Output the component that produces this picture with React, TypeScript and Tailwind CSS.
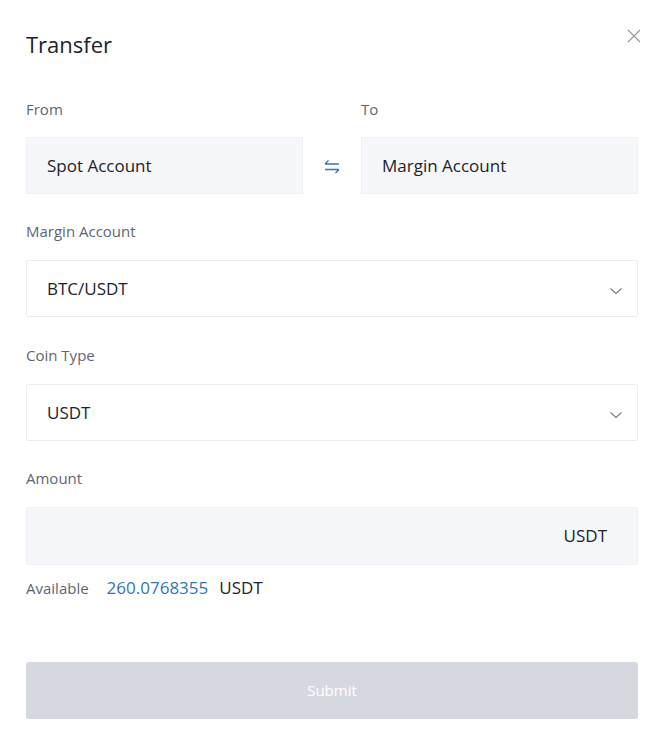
import { useState } from "react";

const FIELD_LABEL = "text-[15px] leading-5 text-[#5e6673]";

function Chevron() {
  return (
    <svg width="14" height="14" viewBox="0 0 14 14" fill="none" aria-hidden="true">
      <path d="M1.5 4.5 L7 9.5 L12.5 4.5" stroke="#707a8a" strokeWidth="1.1" />
    </svg>
  );
}

function SelectBox({ value }: { value: string }) {
  return (
    <div className="flex h-[57px] items-center justify-between rounded-[2px] border border-[#eaecef] bg-white pl-5 pr-[14px] text-[17px] text-[#1e2329]">
      <span>{value}</span>
      <span className="mt-1">
        <Chevron />
      </span>
    </div>
  );
}

export default function App() {
  const [amount, setAmount] = useState("");

  return (
    <div
      className="min-h-[756px] w-[664px] bg-white px-[26px] pt-[29px]"
      style={{ fontFamily: '"Open Sans", "Noto Sans", sans-serif' }}
    >
      {/* header */}
      <div className="flex items-start justify-between">
        <h2 className="text-[22px] leading-[30px] text-[#1e2329]">Transfer</h2>
        <button className="mr-[-4px] mt-[-1px] text-[#929aa5]" aria-label="Close">
          <svg width="16" height="16" viewBox="0 0 16 16" fill="none">
            <path d="M2 2 L14 14 M14 2 L2 14" stroke="currentColor" strokeWidth="1.1" />
          </svg>
        </button>
      </div>

      {/* from / to */}
      <div className="mt-[40px] grid grid-cols-[1fr_58px_1fr]">
        <div>
          <p className={FIELD_LABEL}>From</p>
          <div className="mt-[18px] flex h-[57px] items-center border border-[#eef0f3] bg-[#f5f7fa] pl-5 text-[17px] text-[#1e2329]">
            Spot Account
          </div>
        </div>
        <div className="flex items-end justify-center pb-[20px]">
          <svg width="16" height="16" viewBox="0 0 16 16" fill="none" aria-hidden="true">
            <path d="M1 6 H15 M1 6 L4.5 2.5" stroke="#3375bb" strokeWidth="1.4" />
            <path d="M15 11.5 H1 M15 11.5 L11.5 15" stroke="#3375bb" strokeWidth="1.4" />
          </svg>
        </div>
        <div>
          <p className={FIELD_LABEL}>To</p>
          <div className="mt-[18px] flex h-[57px] items-center border border-[#eef0f3] bg-[#f5f7fa] pl-5 text-[17px] text-[#1e2329]">
            Margin Account
          </div>
        </div>
      </div>

      <p className={`${FIELD_LABEL} mt-[27px]`}>Margin Account</p>
      <div className="mt-[19px]">
        <SelectBox value="BTC/USDT" />
      </div>

      <p className={`${FIELD_LABEL} mt-[28px]`}>Coin Type</p>
      <div className="mt-[19px]">
        <SelectBox value="USDT" />
      </div>

      <p className={`${FIELD_LABEL} mt-[27px]`}>Amount</p>
      <div className="mt-[19px] flex h-[58px] items-center rounded-[2px] border border-[#eef0f3] bg-[#f5f7fa] pl-5 pr-[30px]">
        <input
          value={amount}
          onChange={(e) => setAmount(e.target.value)}
          className="min-w-0 flex-1 bg-transparent text-[17px] text-[#1e2329] outline-none"
        />
        <span className="text-[17px] text-[#1e2329]">USDT</span>
      </div>

      <div className="mt-[13px] flex items-center text-[15px] leading-5">
        <span className="text-[#5e6673]">Available</span>
        <span className="ml-[18px] text-[17px] text-[#3375bb]">260.0768355</span>
        <span className="ml-[11px] text-[17px] text-[#1e2329]">USDT</span>
      </div>

      <button
        disabled
        className="mt-[64px] flex h-[57px] w-full items-center justify-center rounded-[3px] bg-[#d5d8df] text-[15px] text-white"
      >
        Submit
      </button>
    </div>
  );
}
